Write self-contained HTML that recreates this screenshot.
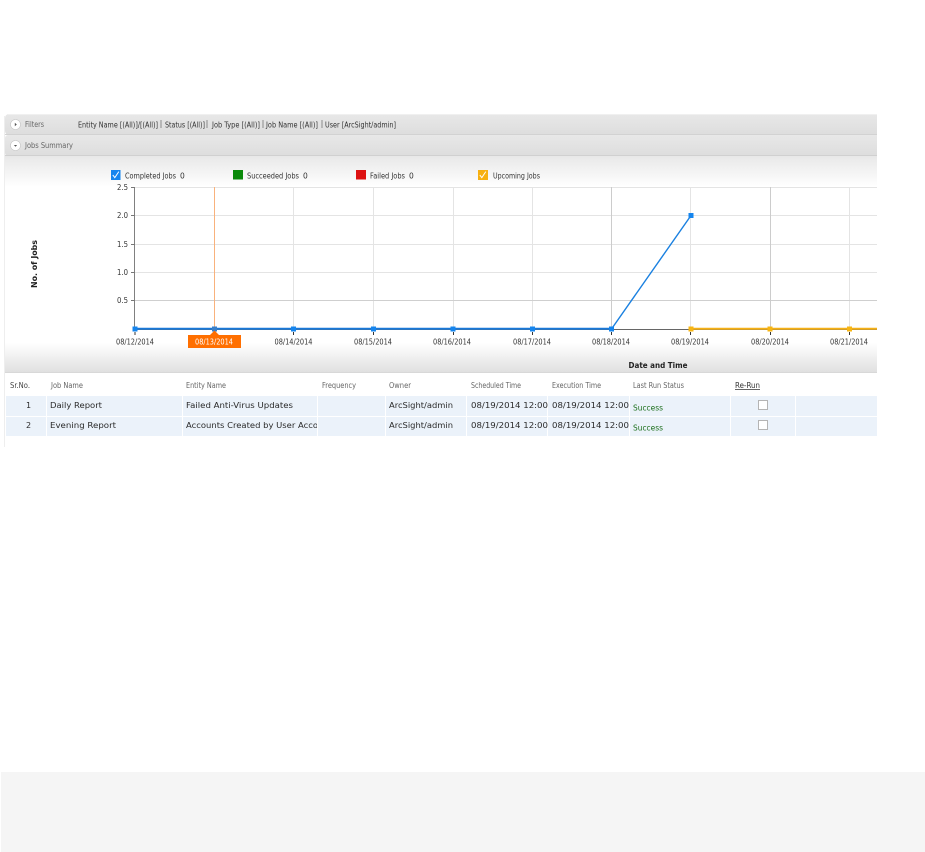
<!DOCTYPE html>
<html><head><meta charset="utf-8">
<style>
html,body{margin:0;padding:0;background:#fff;width:925px;height:852px;overflow:hidden}
svg{position:absolute;left:0;top:0;display:block}
text{font-family:"DejaVu Sans","Liberation Sans",sans-serif;font-size:7.5px;fill:#333}
.t{filter:blur(.3px)}
.h{fill:#666}
.b{font-size:8px;fill:#2a2a2a}
</style></head><body>
<svg width="925" height="852" viewBox="0 0 925 852" xmlns="http://www.w3.org/2000/svg">
<defs>
<linearGradient id="bar" x1="0" y1="0" x2="0" y2="1"><stop offset="0" stop-color="#e8e8e8"/><stop offset="1" stop-color="#dddddd"/></linearGradient>
<linearGradient id="fadeD" x1="0" y1="0" x2="0" y2="1"><stop offset="0" stop-color="#e8e8e8"/><stop offset="1" stop-color="#ffffff"/></linearGradient>
<linearGradient id="fadeU" x1="0" y1="0" x2="0" y2="1"><stop offset="0" stop-color="#ffffff"/><stop offset="1" stop-color="#dfdfdf"/></linearGradient>
<clipPath id="c1"><rect x="183" y="416" width="134" height="20"/></clipPath>
</defs>

<rect x="1" y="772" width="924" height="80" fill="#f5f5f5"/>

<!-- panel -->
<rect x="4" y="116" width="1" height="331" fill="#eeeeee"/>
<rect x="5" y="114" width="872" height="21" rx="4" fill="url(#bar)"/>
<rect x="873" y="114" width="4" height="21" fill="url(#bar)"/>
<rect x="8" y="114" width="869" height="1" fill="#f0f0f0"/>
<rect x="5" y="134" width="872" height="1" fill="#d2d2d2"/>
<rect x="5" y="135" width="872" height="21" rx="3" fill="url(#bar)"/>
<rect x="873" y="135" width="4" height="21" fill="url(#bar)"/>
<rect x="5" y="155" width="872" height="1" fill="#d0d0d0"/>
<rect x="5" y="156" width="872" height="31" fill="url(#fadeD)"/>
<rect x="5" y="343" width="872" height="30" fill="url(#fadeU)"/>
<rect x="5" y="372" width="872" height="1" fill="#d8d8d8"/>

<!-- toggle icons -->
<circle cx="15.500" cy="124.500" r="5" fill="#fff" stroke="#c4c4c4" stroke-width=".6"/>
<path d="M14.800 122.800l2 1.700-2 1.700z" fill="#555"/>
<circle cx="15.500" cy="145.500" r="5" fill="#fff" stroke="#c4c4c4" stroke-width=".6"/>
<path d="M13.900 145l1.600 1.700 1.600-1.700z" fill="#555"/>

<!-- grid -->
<g stroke="#e4e4e4" stroke-width="1" fill="none">
<path d="M135 187.500H877M135 215.500H877M135 244.500H877M135 272.500H877"/>
<path d="M293.500 187V329M373.500 187V329M453.500 187V329M532.500 187V329M690.500 187V329M849.500 187V329"/>
</g>
<path d="M135 300.500H877" stroke="#cfcfcf"/>
<path d="M611.500 187V329M770.500 187V329" stroke="#cccccc"/>
<path d="M214.500 187V329" stroke="#f9b27c"/>
<path d="M134.500 187V329" stroke="#808080"/>
<path d="M131 187.500h4M131 215.500h4M131 244.500h4M131 272.500h4M131 300.500h4" stroke="#777"/>
<path d="M135 329.500H877" stroke="#666"/>
<path d="M135 332v3M214.500 332v3M293.500 332v3M373.500 332v3M453.500 332v3M532.500 332v3M611.500 332v3M690.500 332v3M770.500 332v3M849.500 332v3" stroke="#333"/>

<!-- series -->
<path d="M611.500 329L691 215.500" fill="none" stroke="#1a80e0" stroke-width="1.400"/>
<path d="M135 328.800H611.500" fill="none" stroke="#1a78d8" stroke-width="2"/>
<path d="M691 328.800H877" fill="none" stroke="#f5b016" stroke-width="2"/>
<g fill="#1585ee">
<rect x="132.500" y="326.500" width="5" height="5"/><rect x="212" y="326.500" width="5" height="5" fill="#3a7fc8"/><rect x="291" y="326.500" width="5" height="5"/><rect x="371" y="326.500" width="5" height="5"/><rect x="450.500" y="326.500" width="5" height="5"/><rect x="530" y="326.500" width="5" height="5"/><rect x="609" y="326.500" width="5" height="5"/><rect x="688.500" y="213" width="5" height="5"/>
</g>
<g fill="#f7b512">
<rect x="688.500" y="326.500" width="5" height="5"/><rect x="767.500" y="326.500" width="5" height="5"/><rect x="847" y="326.500" width="5" height="5"/>
</g>

<!-- highlight label -->
<path d="M214.500 330.500l4.500 4.500h22v13h-53v-13h22z" fill="#ff6f00"/>

<!-- legend -->
<rect x="111" y="170" width="9.500" height="10" fill="#1585ee"/>
<path d="M112.800 175l2 2.600 4-6" fill="none" stroke="#fff" stroke-width="1"/>
<rect x="233" y="170" width="10" height="9.500" fill="#0a8a0a"/>
<rect x="356" y="170" width="10" height="9.500" fill="#dd1111"/>
<rect x="478" y="170" width="10" height="10" fill="#f7b010"/>
<path d="M479.800 175l2 2.600 4-6" fill="none" stroke="#fff" stroke-width="1"/>

<!-- table -->
<rect x="5" y="373" width="872" height="74" fill="#fff"/>
<g fill="#ebf2fa">
<rect x="6" y="396" width="40" height="20"/><rect x="47" y="396" width="135" height="20"/><rect x="183" y="396" width="134" height="20"/><rect x="318" y="396" width="67" height="20"/><rect x="386" y="396" width="80" height="20"/><rect x="467" y="396" width="80" height="20"/><rect x="548" y="396" width="81" height="20"/><rect x="630" y="396" width="100" height="20"/><rect x="731" y="396" width="64" height="20"/><rect x="796" y="396" width="81" height="20"/>
<rect x="6" y="417" width="40" height="19"/><rect x="47" y="417" width="135" height="19"/><rect x="183" y="417" width="134" height="19"/><rect x="318" y="417" width="67" height="19"/><rect x="386" y="417" width="80" height="19"/><rect x="467" y="417" width="80" height="19"/><rect x="548" y="417" width="81" height="19"/><rect x="630" y="417" width="100" height="19"/><rect x="731" y="417" width="64" height="19"/><rect x="796" y="417" width="81" height="19"/>
</g>
<rect x="758.500" y="400.500" width="9" height="9" fill="#fff" stroke="#b4b4b4"/>
<rect x="758.500" y="420.500" width="9" height="9" fill="#fff" stroke="#b4b4b4"/>

<g class="t">
<g class="h">
<text x="25" y="127" class="h" textLength="19" lengthAdjust="spacingAndGlyphs">Filters</text>
<text x="25" y="148" class="h" textLength="48" lengthAdjust="spacingAndGlyphs">Jobs Summary</text>
</g>
<text x="78" y="127.500" textLength="80" lengthAdjust="spacingAndGlyphs">Entity Name [(All)]/[(All)]</text>
<text x="165" y="127.500" textLength="40" lengthAdjust="spacingAndGlyphs">Status [(All)]</text>
<text x="212" y="127.500" textLength="48" lengthAdjust="spacingAndGlyphs">Job Type [(All)]</text>
<text x="266" y="127.500" textLength="52" lengthAdjust="spacingAndGlyphs">Job Name [(All)]</text>
<text x="325" y="127.500" textLength="71" lengthAdjust="spacingAndGlyphs">User [ArcSight/admin]</text>
<text x="160" y="126" textLength="2" lengthAdjust="spacingAndGlyphs">|</text>
<text x="206" y="126" textLength="2" lengthAdjust="spacingAndGlyphs">|</text>
<text x="262" y="126" textLength="2" lengthAdjust="spacingAndGlyphs">|</text>
<text x="321" y="126" textLength="2" lengthAdjust="spacingAndGlyphs">|</text>

<text x="125" y="178.500" textLength="51" lengthAdjust="spacingAndGlyphs">Completed Jobs</text><text x="180" y="178.500">0</text>
<text x="247" y="178.500" textLength="52" lengthAdjust="spacingAndGlyphs">Succeeded Jobs</text><text x="303" y="178.500">0</text>
<text x="370" y="178.500" textLength="35" lengthAdjust="spacingAndGlyphs">Failed Jobs</text><text x="409" y="178.500">0</text>
<text x="493" y="178.500" textLength="47" lengthAdjust="spacingAndGlyphs">Upcoming Jobs</text>

<text x="117" y="190" textLength="11" lengthAdjust="spacingAndGlyphs">2.5</text>
<text x="117" y="218" textLength="11" lengthAdjust="spacingAndGlyphs">2.0</text>
<text x="117" y="247" textLength="11" lengthAdjust="spacingAndGlyphs">1.5</text>
<text x="117" y="275" textLength="11" lengthAdjust="spacingAndGlyphs">1.0</text>
<text x="117" y="303" textLength="11" lengthAdjust="spacingAndGlyphs">0.5</text>

<text x="116" y="344.500" textLength="38" lengthAdjust="spacingAndGlyphs">08/12/2014</text>
<text x="195" y="344.500" textLength="38" lengthAdjust="spacingAndGlyphs" style="fill:#fff">08/13/2014</text>
<text x="274.500" y="344.500" textLength="38" lengthAdjust="spacingAndGlyphs">08/14/2014</text>
<text x="354" y="344.500" textLength="38" lengthAdjust="spacingAndGlyphs">08/15/2014</text>
<text x="433" y="344.500" textLength="38" lengthAdjust="spacingAndGlyphs">08/16/2014</text>
<text x="513" y="344.500" textLength="38" lengthAdjust="spacingAndGlyphs">08/17/2014</text>
<text x="592" y="344.500" textLength="38" lengthAdjust="spacingAndGlyphs">08/18/2014</text>
<text x="671" y="344.500" textLength="38" lengthAdjust="spacingAndGlyphs">08/19/2014</text>
<text x="751" y="344.500" textLength="38" lengthAdjust="spacingAndGlyphs">08/20/2014</text>
<text x="830" y="344.500" textLength="38" lengthAdjust="spacingAndGlyphs">08/21/2014</text>

<text x="628.500" y="368" textLength="59" lengthAdjust="spacingAndGlyphs" style="font-weight:bold;fill:#222">Date and Time</text>
<text transform="translate(37 288) rotate(-90)" textLength="48" lengthAdjust="spacingAndGlyphs" style="font-weight:bold;fill:#222">No. of Jobs</text>

<text x="10" y="388" textLength="20" lengthAdjust="spacingAndGlyphs" style="fill:#444">Sr.No.</text>
<text x="51" y="388" class="h" textLength="32" lengthAdjust="spacingAndGlyphs">Job Name</text>
<text x="186" y="388" class="h" textLength="40" lengthAdjust="spacingAndGlyphs">Entity Name</text>
<text x="322" y="388" class="h" textLength="34" lengthAdjust="spacingAndGlyphs">Frequency</text>
<text x="389" y="388" class="h" textLength="22" lengthAdjust="spacingAndGlyphs">Owner</text>
<text x="471" y="388" class="h" textLength="50" lengthAdjust="spacingAndGlyphs">Scheduled Time</text>
<text x="552" y="388" class="h" textLength="49" lengthAdjust="spacingAndGlyphs">Execution Time</text>
<text x="633" y="388" class="h" textLength="51" lengthAdjust="spacingAndGlyphs">Last Run Status</text>
<text x="735" y="388" textLength="25" lengthAdjust="spacingAndGlyphs" style="fill:#333;text-decoration:underline">Re-Run</text>

<text x="26" y="408" class="b">1</text>
<text x="50" y="408" class="b" textLength="52" lengthAdjust="spacingAndGlyphs">Daily Report</text>
<text x="186" y="408" class="b" textLength="107" lengthAdjust="spacingAndGlyphs">Failed Anti-Virus Updates</text>
<text x="389" y="408" class="b" textLength="64" lengthAdjust="spacingAndGlyphs">ArcSight/admin</text>
<text x="471" y="408" class="b" textLength="77" lengthAdjust="spacingAndGlyphs">08/19/2014 12:00</text>
<text x="552" y="408" class="b" textLength="77" lengthAdjust="spacingAndGlyphs">08/19/2014 12:00</text>
<text x="633" y="410.500" textLength="30" lengthAdjust="spacingAndGlyphs" style="fill:#1a6e1a">Success</text>

<text x="26" y="428" class="b">2</text>
<text x="50" y="428" class="b" textLength="66" lengthAdjust="spacingAndGlyphs">Evening Report</text>
<g clip-path="url(#c1)"><text x="186" y="428" class="b" textLength="146" lengthAdjust="spacingAndGlyphs">Accounts Created by User Account</text></g>
<text x="389" y="428" class="b" textLength="64" lengthAdjust="spacingAndGlyphs">ArcSight/admin</text>
<text x="471" y="428" class="b" textLength="77" lengthAdjust="spacingAndGlyphs">08/19/2014 12:00</text>
<text x="552" y="428" class="b" textLength="77" lengthAdjust="spacingAndGlyphs">08/19/2014 12:00</text>
<text x="633" y="430.500" textLength="30" lengthAdjust="spacingAndGlyphs" style="fill:#1a6e1a">Success</text>
</g>
</svg>
</body></html>
